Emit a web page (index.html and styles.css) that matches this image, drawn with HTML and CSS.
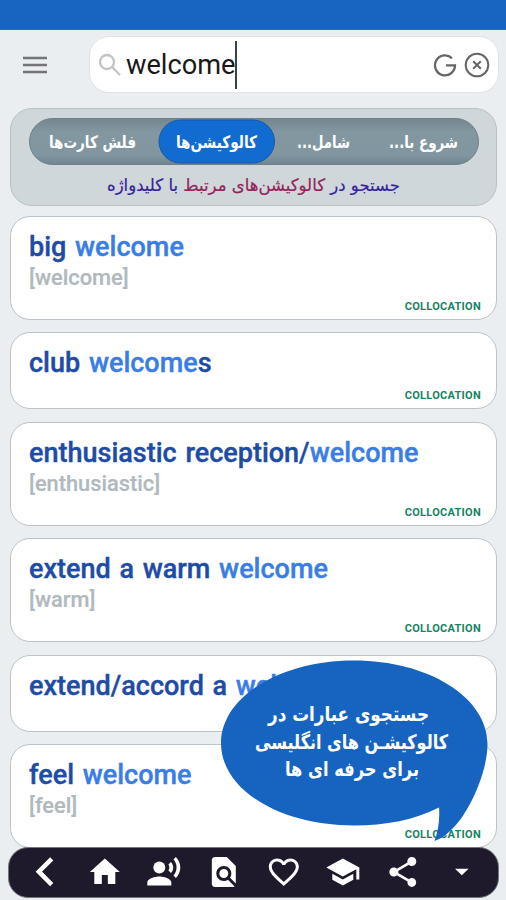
FILE: index.html
```html
<!DOCTYPE html>
<html lang="fa">
<head>
<meta charset="utf-8">
<title>Collocations</title>
<link rel="stylesheet" href="styles.css">
</head>
<body>
<div class="app">
  <div class="status"></div>
  <header class="top">
    <svg class="menu" viewBox="0 0 24 18"><path d="M0 2h24M0 9h24M0 16h24"/></svg>
    <div class="search">
      <svg class="glass" viewBox="0 0 24 24"><circle cx="9" cy="9" r="7"/><path d="M14 14l8 8"/></svg>
      <span class="query">welcome</span><span class="caret"></span>
      <svg class="google" viewBox="0 0 24 24"><path d="M19 5.2A10 10 0 1 0 22 12.3H13"/></svg>
      <svg class="clear" viewBox="0 0 26 26"><circle cx="13" cy="13" r="11.3"/><path d="M9.2 9.2l7.6 7.6M16.8 9.2l-7.6 7.6"/></svg>
    </div>
  </header>
  <section class="filter">
    <svg class="tabs" viewBox="0 0 450 47" direction="rtl">
      <defs><linearGradient id="bar" x1="0" y1="0" x2="0" y2="1"><stop offset="0" stop-color="#748790"/><stop offset=".3" stop-color="#8397a0"/><stop offset=".8" stop-color="#8196a0"/><stop offset="1" stop-color="#70858f"/></linearGradient></defs>
      <rect x=".5" y=".5" width="449" height="46" rx="23" fill="url(#bar)" stroke="#708088"/>
      <rect x="130" y="2" width="115.500" height="43" rx="21.500" fill="#126bd0" stroke="#1957a8"/>
      <g class="tab-text">
        <text x="429" y="29.500" textLength="69" lengthAdjust="spacingAndGlyphs">شروع با...</text>
        <text x="321" y="29.500" textLength="53" lengthAdjust="spacingAndGlyphs">شامل...</text>
        <text x="228" y="29.500" textLength="81" lengthAdjust="spacingAndGlyphs">کالوکیشن‌ها</text>
        <text x="107" y="29.500" textLength="87" lengthAdjust="spacingAndGlyphs">فلش کارت‌ها</text>
      </g>
    </svg>
    <svg class="hint" viewBox="0 0 450 30" direction="rtl">
      <text x="371" y="19" textLength="293" lengthAdjust="spacingAndGlyphs">جستجو در <tspan class="accent">کالوکیشن‌های مرتبط</tspan> با کلیدواژه</text>
    </svg>
  </section>
  <main class="list">
    <article class="card tall"><h2>big <b>welcome</b></h2><p>[welcome]</p><span class="tag">COLLOCATION</span></article>
    <article class="card"><h2>club <b>welcome</b>s</h2><span class="tag">COLLOCATION</span></article>
    <article class="card tall"><h2>enthusiastic reception/<b>welcome</b></h2><p>[enthusiastic]</p><span class="tag">COLLOCATION</span></article>
    <article class="card tall"><h2>extend a warm <b>welcome</b></h2><p>[warm]</p><span class="tag">COLLOCATION</span></article>
    <article class="card"><h2>extend/accord a <b>welcome</b></h2></article>
    <article class="card tall"><h2>feel <b>welcome</b></h2><p>[feel]</p><span class="tag">COLLOCATION</span></article>
  </main>
  <svg class="bubble" viewBox="0 0 270 184" direction="rtl">
    <path d="M134 .5C208 .5 267.500 37 267.500 84C267.500 115 246 158 230 171C225 176 220 179 214.500 181C218 172 220 160 219 147.500C195 160 165 165.500 134 165.500C60 165.500 1 130 1 83C1 37 60 .5 134 .5Z"/>
    <text x="209" y="61" textLength="161" lengthAdjust="spacingAndGlyphs">جستجوی عبارات در</text>
    <text x="228" y="89" textLength="193" lengthAdjust="spacingAndGlyphs">کالوکیشـن های انگلیسی</text>
    <text x="199" y="116" textLength="134" lengthAdjust="spacingAndGlyphs">برای حرفه ای ها</text>
  </svg>
  <nav class="nav">
    <svg viewBox="0 0 24 24"><path d="M16.600 3.200L8 11.800l8.600 8.600" class="back"/></svg>
    <svg viewBox="0 0 24 24"><path d="M10 20v-6h4v6h5v-8h3L12 3 2 12h3v8z"/></svg>
    <svg viewBox="0 0 24 24"><circle cx="9" cy="9" r="4"/><path d="M9 15c-2.670 0-8 1.340-8 4v2h16v-2c0-2.660-5.330-4-8-4zm7.760-9.640l-1.680 1.690c.84 1.180.84 2.710 0 3.890l1.680 1.690c2.020-2.020 2.020-5.070 0-7.270zM20.070 2l-1.630 1.630c2.770 3.020 2.770 7.560 0 10.740L20.070 16c3.900-3.890 3.910-9.950 0-14z"/></svg>
    <svg viewBox="0 0 24 24"><path d="M20 19.590V8l-6-6H6c-1.100 0-1.990.9-1.990 2L4 20c0 1.100.89 2 1.990 2H18c.45 0 .85-.15 1.190-.4l-4.430-4.430c-.8.520-1.740.83-2.760.83-2.760 0-5-2.240-5-5s2.240-5 5-5 5 2.240 5 5c0 1.020-.31 1.960-.83 2.750L20 19.590zM9 13c0 1.660 1.340 3 3 3s3-1.340 3-3-1.340-3-3-3-3 1.340-3 3z"/></svg>
    <svg viewBox="0 0 24 24"><path d="M16.500 3c-1.740 0-3.410.81-4.500 2.090C10.910 3.810 9.240 3 7.500 3 4.420 3 2 5.420 2 8.500c0 3.780 3.400 6.860 8.550 11.540L12 21.350l1.450-1.320C18.600 15.360 22 12.280 22 8.500 22 5.420 19.580 3 16.500 3zm-4.400 15.550l-.1.100-.1-.1C7.140 14.240 4 11.390 4 8.500 4 6.500 5.500 5 7.500 5c1.540 0 3.040.99 3.570 2.360h1.870C13.460 5.990 14.960 5 16.500 5c2 0 3.500 1.500 3.500 3.500 0 2.890-3.140 5.740-7.900 10.050z"/></svg>
    <svg viewBox="0 0 24 24"><path d="M5 13.180v4L12 21l7-3.820v-4L12 17l-7-3.820zM12 3L1 9l11 6 9-4.910V17h2V9L12 3z"/></svg>
    <svg viewBox="0 0 24 24"><path d="M18 16.080c-.76 0-1.440.3-1.960.77L8.910 12.700c.05-.23.090-.46.090-.7s-.04-.47-.09-.7l7.050-4.110c.54.5 1.250.81 2.040.81 1.660 0 3-1.340 3-3s-1.340-3-3-3-3 1.340-3 3c0 .24.040.47.090.7L8.040 9.810C7.500 9.310 6.790 9 6 9c-1.660 0-3 1.340-3 3s1.340 3 3 3c.79 0 1.500-.31 2.040-.81l7.120 4.160c-.05.210-.08.430-.08.650 0 1.610 1.310 2.920 2.920 2.920s2.920-1.310 2.920-2.920-1.310-2.920-2.920-2.920z"/></svg>
    <svg viewBox="0 0 24 24"><path d="M7.500 9.800l4.500 4.400 4.500-4.400z"/></svg>
  </nav>
</div>
</body>
</html>
```
FILE: styles.css
```css
* { box-sizing: border-box; }
body { margin: 0; background: #eaeef1; font-family: Roboto, "DejaVu Sans", sans-serif; }
.app { position: relative; width: 506px; height: 900px; overflow: hidden; direction: ltr; }
.status { height: 30px; background: #1764c1; border-bottom: 1px solid #2d6db5; }
.top { display: flex; align-items: center; height: 69px; padding: 0 7px 0 23px; }
.menu { width: 24px; height: 18px; margin-right: 42px; stroke: #737578; stroke-width: 2.6; }
.search { display: flex; align-items: center; flex: 1; height: 57px; padding: 0 8px; background: #fff; border: 1px solid #dfe3e5; border-radius: 20px; }
.search svg { fill: none; }
.glass { width: 24px; height: 24px; margin-right: 4px; stroke: #c3c3c3; stroke-width: 2.3; }
.query { font-size: 27.2px; color: #191919; line-height: 50px; }
.caret { width: 2px; height: 48px; background: #34463f; }
.google { width: 24px; height: 24px; margin-left: auto; stroke: #656567; stroke-width: 2.3; }
.clear { width: 26px; height: 26px; margin-left: 7px; stroke: #656567; stroke-width: 2; }
.filter { width: 487px; height: 98px; margin: 9px 0 0 10px; padding: 9px 18px 0; border: 1px solid #b8c1c4; border-radius: 22px; background: #cfd7da; }
.filter svg { display: block; overflow: visible; }
.tabs { width: 450px; height: 47px; }
.tab-text { fill: #fff; font: bold 17px "DejaVu Sans", sans-serif; }
.hint { width: 450px; height: 30px; margin-top: 7px; fill: #36239a; stroke: #36239a; stroke-width: .2px; font: 17px "DejaVu Sans", sans-serif; }
.accent { fill: #92245a; stroke: #92245a; }
.list { display: flex; flex-direction: column; gap: 12.4px; padding: 9.500px 9px 0 10px; }
.card { position: relative; flex: none; height: 77.500px; padding: 12px 18px; background: #fff; border: 1.5px solid #bbc4c8; border-radius: 20px; display: flex; flex-direction: column; }
.card.tall { height: 104px; }
h2 { margin: 0; font-size: 27px; line-height: 36px; font-weight: 500; color: #1e4ca5; white-space: nowrap; word-spacing: 2px; -webkit-text-stroke: .4px currentColor; }
h2 b { font-weight: 500; color: #397de5; }
.card p { margin: 0; font-size: 21.800px; line-height: 26px; font-weight: 500; color: #b0b9bd; -webkit-text-stroke: .2px currentColor; }
.tag { margin-top: auto; align-self: flex-end; margin-right: -3px; margin-bottom: -6px; font-size: 11px; line-height: 13px; letter-spacing: .28px; font-weight: 700; color: #168463; }
.bubble { position: absolute; left: 220px; top: 660px; width: 270px; height: 184px; fill: #1764c0; overflow: visible; }
.bubble text { fill: #fff; font: bold 20px "DejaVu Sans", sans-serif; }
.nav { position: absolute; left: 8px; top: 847px; width: 491px; height: 51px; padding: 0 6px 1px; display: flex; align-items: center; background: #1e1a2c; border: 1px solid #77757f; border-radius: 20px; }
.nav svg { flex: 1; height: 36px; min-width: 0; fill: #fff; }
.nav .back { fill: none; stroke: #fff; stroke-width: 3; }
```
